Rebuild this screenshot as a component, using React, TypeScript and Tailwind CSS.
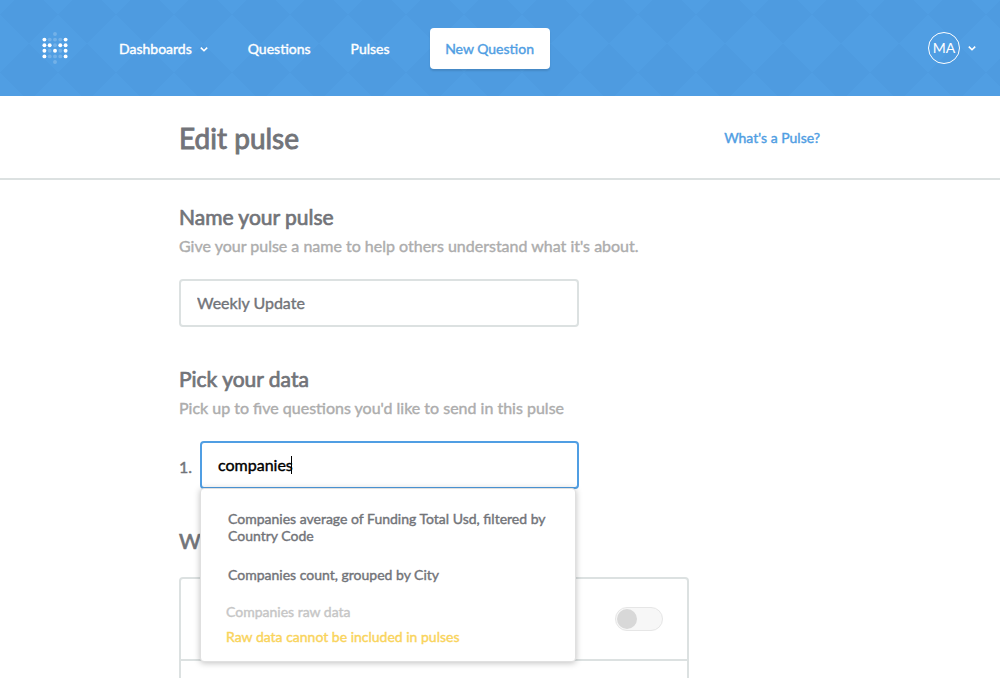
import { useState } from "react";

const LOGO_DOTS = [
  "..o..",
  "#ooo#",
  "##o##",
  "#o#o#",
  "#ooo#",
  "..o..",
];

function Logo() {
  return (
    <svg viewBox="0 0 28 34" className="h-[34px] w-7" role="img" aria-label="Metabase">
      {LOGO_DOTS.flatMap((row, y) =>
        row.split("").map((dot, x) =>
          dot === "." ? null : (
            <circle
              key={`${x}-${y}`}
              cx={3.4 + x * 5.3}
              cy={3 + y * 5.6}
              r={1.95}
              fill="#fff"
              fillOpacity={dot === "#" ? 1 : 0.2}
            />
          ),
        ),
      )}
    </svg>
  );
}

function Chevron() {
  return (
    <svg viewBox="0 0 8 6" className="h-1.5 w-2" fill="none" stroke="currentColor" strokeWidth="1.6" aria-hidden="true">
      <path d="M0.8 1.6 L4 4.7 L7.2 1.6" />
    </svg>
  );
}

function NavBar() {
  return (
    <header className="flex h-24 items-center bg-[#509ee3] bg-[linear-gradient(45deg,#4e9be0_25%,transparent_25%,transparent_75%,#4e9be0_75%),linear-gradient(-45deg,#4e9be0_25%,transparent_25%,transparent_75%,#4e9be0_75%)] bg-[length:58px_58px] bg-[position:29px_14px] pr-6 pl-[41px] text-sm text-white">
      <a href="#home">
        <Logo />
      </a>
      <nav className="ml-[50px] flex items-center gap-10 pt-px [-webkit-text-stroke:0.4px]">
        <button type="button" className="flex items-center gap-2">
          Dashboards
          <Chevron />
        </button>
        <a href="#questions">Questions</a>
        <a href="#pulses">Pulses</a>
        <a
          href="#new"
          className="flex h-[41px] w-[120px] items-center justify-center rounded bg-white text-[#509ee3] shadow-[0_2px_2px_rgba(0,0,0,0.12)]"
        >
          New Question
        </a>
      </nav>
      <button type="button" className="ml-auto flex items-center gap-2">
        <span className="flex size-8 items-center justify-center rounded-full border border-white">MA</span>
        <Chevron />
      </button>
    </header>
  );
}

function SectionTitle({ title, hint }: { title: string; hint?: string }) {
  return (
    <>
      <h2 className="text-[21px] leading-[26px] text-[#727479] [-webkit-text-stroke:0.7px]">{title}</h2>
      {hint && <p className="mt-1 text-base leading-6 text-[#adadad]">{hint}</p>}
    </>
  );
}

function QuestionPicker() {
  const [query, setQuery] = useState("companies");
  return (
    <div className="mt-[21px] flex w-[400px] items-center">
      <label htmlFor="question-1" className="w-[21px] shrink-0 pt-1 text-base text-[#727479]">
        1.
      </label>
      <div className="relative grow">
        <input
          id="question-1"
          autoFocus
          value={query}
          onChange={(event) => setQuery(event.target.value)}
          className="block h-12 w-full rounded border-2 border-[#509ee3] px-4 pb-0.5 text-base text-black caret-transparent outline-none"
        />
        <span className="absolute top-[15px] left-[91px] h-[18px] w-px bg-black" aria-hidden="true" />
        <ul className="absolute top-[47px] right-[3px] left-0 z-10 rounded border border-[#e0e0e0] bg-white pt-[13px] pb-3 text-sm leading-[17px] text-[#727479] shadow-[0_1px_6px_rgba(0,0,0,0.25)]">
          <li>
            <button type="button" className="pt-2 pr-6 pb-3 pl-[27px] text-left">
              Companies average of Funding Total Usd, filtered by Country Code
            </button>
          </li>
          <li>
            <button type="button" className="py-2.5 pr-6 pl-[27px] text-left">
              Companies count, grouped by City
            </button>
          </li>
          <li className="pt-2.5 pr-6 pb-1 pl-[25px]">
            <p className="text-[#c6c6c6]">Companies raw data</p>
            <p className="mt-2 text-[#f9d45c]">Raw data cannot be included in pulses</p>
          </li>
        </ul>
      </div>
    </div>
  );
}

export default function App() {
  const [name, setName] = useState("Weekly Update");
  return (
    <div className="h-screen overflow-hidden bg-white font-['Lato',sans-serif]">
      <NavBar />
      <div className="[-webkit-text-stroke:0.4px]">
        <div className="border-b-2 border-[#dce1e1]">
          <div className="mx-auto flex h-[82px] max-w-[642px] items-center justify-between pt-0.5 pr-px">
            <h1 className="text-[28px] text-[#727479] [-webkit-text-stroke:0.9px]">Edit pulse</h1>
            <a href="#help" className="text-sm text-[#509ee3]">
              What's a Pulse?
            </a>
          </div>
        </div>
        <main className="mx-auto max-w-[642px] pt-6">
          <section>
            <SectionTitle title="Name your pulse" hint="Give your pulse a name to help others understand what it's about." />
            <input
              aria-label="Name your pulse"
              value={name}
              onChange={(event) => setName(event.target.value)}
              className="mt-[21px] block h-12 w-[400px] rounded border-2 border-[#dce1e1] px-4 pb-0.5 text-base text-[#727479] outline-none"
            />
          </section>
          <section className="mt-[39px]">
            <SectionTitle title="Pick your data" hint="Pick up to five questions you'd like to send in this pulse" />
            <QuestionPicker />
          </section>
          <section className="mt-[39px]">
            <SectionTitle title="Where should this data go?" />
            <div className="mt-[23px] w-[510px] rounded border-2 border-[#dce1e1]">
              <div className="flex h-20 items-center justify-end pr-6">
                <label className="relative flex h-6 w-12 items-center rounded-full border border-[#e6e6e6] bg-[#f7f7f7] p-px">
                  <input type="checkbox" aria-label="Email" className="peer sr-only" />
                  <span className="size-5 rounded-full bg-[#d8d8d8] peer-checked:translate-x-6" />
                </label>
              </div>
              <div className="h-20 border-t-2 border-[#dce1e1]" />
            </div>
          </section>
        </main>
      </div>
    </div>
  );
}
